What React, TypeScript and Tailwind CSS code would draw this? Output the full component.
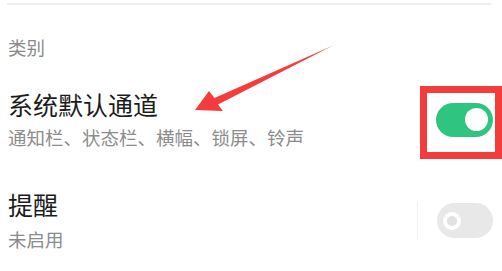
export default function App() {
  return (
    <div className="relative w-[502px] h-[271px] overflow-hidden bg-white font-['Noto_Sans_CJK_SC','Noto_Sans',sans-serif]">
      {/* Top divider */}
      <div className="ml-[7px] mr-[11px] mt-[3px] h-[2px] bg-[#efefef]" />

      {/* Section label */}
      <p className="ml-[8px] mt-[33px] text-[18.5px] leading-[18.5px] text-[#8a8a8a]">类别</p>

      {/* Row: default channel */}
      <div className="mt-[29px] flex items-start justify-between pl-[8px]">
        <div className="pt-[6px]">
          <p className="text-[25px] leading-[25px] text-[#1c1c1c]">系统默认通道</p>
          <p className="mt-[11px] text-[18.5px] leading-[18.5px] text-[#8c8c8c]">
            通知栏、状态栏、横幅、锁屏、铃声
          </p>
        </div>
        <div className="h-[73px] w-[82px] border-[7px] border-[#f43c3c] pl-[9px] pt-[10px]">
          <Toggle on />
        </div>
      </div>

      {/* Row: reminder */}
      <div className="mt-[33px] flex items-start justify-between pl-[8px] pr-[9px]">
        <div>
          <p className="text-[25px] leading-[25px] text-[#1c1c1c]">提醒</p>
          <p className="mt-[13px] text-[18.5px] leading-[18.5px] text-[#8c8c8c]">未启用</p>
        </div>
        <div className="mt-[9px] flex items-center gap-[19px]">
          <div className="h-[40px] w-px bg-[#f1f1f1]" />
          <Toggle />
        </div>
      </div>

      {/* Annotation arrow */}
      <svg className="pointer-events-none absolute left-0 top-0" width="502" height="271" viewBox="0 0 502 271">
        <polygon
          points="195,110 209,91 214.5,98 333,45.5 218,104.5 223,111"
          fill="#f43c3c"
        />
      </svg>
    </div>
  );
}

function Toggle({ on = false }: { on?: boolean }) {
  if (on) {
    return (
      <div className="flex h-[34px] w-[57px] items-center justify-end rounded-full bg-[#2fc47f] pr-[5px]">
        <div className="h-[23px] w-[23px] rounded-full bg-white" />
      </div>
    );
  }
  return (
    <div className="flex h-[35px] w-[56px] items-center rounded-full bg-[#e8e8e8] pl-[6px]">
      <div className="flex h-[18px] w-[18px] items-center justify-center rounded-full bg-white">
        <div className="h-[10px] w-[10px] rounded-full bg-[#e2e2e2]" />
      </div>
    </div>
  );
}
